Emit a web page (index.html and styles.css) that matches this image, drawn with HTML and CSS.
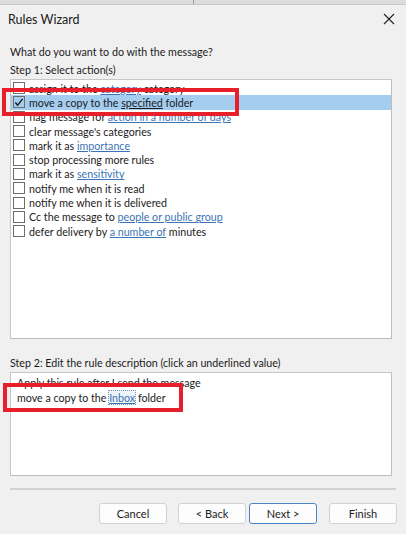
FILE: index.html
```html
<!DOCTYPE html>
<html lang="en">
  <head>
    <meta charset="UTF-8" />
    <meta name="viewport" content="width=device-width, initial-scale=1.0" />
    <title>Rules Wizard</title>
    <link rel="stylesheet" href="styles.css">
  </head>
  <body>
    <div class="top-strip"><span class="strip-split"></span></div>

    <div class="title-bar">
      <span class="title">Rules Wizard</span>
      <svg class="close" width="12" height="12" viewBox="0 0 12 12">
        <path d="M1 1 L11 11 M11 1 L1 11" stroke="#222" stroke-width="1.1" fill="none" />
      </svg>
    </div>

    <div class="content">
      <p class="question">What do you want to do with the message?</p>
      <p class="step">Step 1: Select action(s)</p>

      <div class="action-list">
        <div class="row"><span class="box"></span>assign it to the&nbsp;<a>category</a>&nbsp;category</div>
        <div class="row selected"><span class="box checked">
          <svg width="11" height="11" viewBox="0 0 11 11"><path d="M1.5 5.5 L4 8.5 L9.5 1.5" stroke="#111" stroke-width="1.4" fill="none" /></svg>
        </span>move a copy to the&nbsp;<a class="plain">specified</a>&nbsp;folder</div>
        <div class="row"><span class="box"></span>flag message for&nbsp;<a>action in a number of days</a></div>
        <div class="row"><span class="box"></span>clear message's categories</div>
        <div class="row"><span class="box"></span>mark it as&nbsp;<a>importance</a></div>
        <div class="row"><span class="box"></span>stop processing more rules</div>
        <div class="row"><span class="box"></span>mark it as&nbsp;<a>sensitivity</a></div>
        <div class="row"><span class="box"></span>notify me when it is read</div>
        <div class="row"><span class="box"></span>notify me when it is delivered</div>
        <div class="row"><span class="box"></span>Cc the message to&nbsp;<a>people or public group</a></div>
        <div class="row"><span class="box"></span>defer delivery by&nbsp;<a>a number of</a>&nbsp;minutes</div>

        <div class="mark mark-action"></div>
      </div>

      <p class="step step-two">Step 2: Edit the rule description (click an underlined value)</p>

      <div class="description">
        <div class="desc-line">Apply this rule after I send the message</div>
        <div class="desc-line">move a copy to the <a class="focus">Inbox</a> folder</div>
        <div class="mark mark-desc"></div>
      </div>

      <div class="separator"></div>

      <div class="buttons">
        <button class="btn">Cancel</button>
        <button class="btn btn-back">&lt; Back</button>
        <button class="btn btn-next">Next &gt;</button>
        <button class="btn btn-finish">Finish</button>
      </div>
    </div>
  </body>
</html>
```

FILE: styles.css
```css
body {
  margin: 0;
  background-color: #f0f0f0;
  font-family: "Lato", "Open Sans", sans-serif;
  font-size: 10.7px;
  color: #1b1b1b;
}

.top-strip {
  height: 4px;
  background-color: #dcdcdc;
  border-bottom: 1px solid #c9c9c9;
  position: relative;
}

.strip-split {
  position: absolute;
  left: 193px;
  top: 0;
  width: 1px;
  height: 4px;
  background-color: #9a9a9a;
}

.title-bar {
  display: flex;
  align-items: center;
  justify-content: space-between;
  height: 28px;
  padding: 0 11px 0 8px;
}

.title {
  font-size: 12.5px;
}

.content {
  padding: 0 14px 0 10px;
}

.question {
  margin: 11px 0 0 0;
  line-height: 16px;
}

.step {
  margin: 2px 0 0 0;
  line-height: 16px;
}

/* list of actions */
.action-list {
  position: relative;
  margin-top: 1px;
  height: 260px;
  background-color: #ffffff;
  border: 1px solid #c7c7c7;
  border-right-color: #bdbdbd;
  border-bottom-color: #bdbdbd;
  padding-top: 1px;
  box-sizing: border-box;
}

.row {
  display: flex;
  align-items: center;
  height: 14.3px;
  padding-left: 2px;
  white-space: nowrap;
}

.row.selected {
  background-color: #a4cdf0;
}

.box {
  display: inline-flex;
  align-items: center;
  justify-content: center;
  width: 10px;
  height: 10px;
  border: 1px solid #6e6e6e;
  background-color: #ffffff;
  margin-right: 4px;
  flex-shrink: 0;
}

.box.checked {
  background-color: transparent;
}

a {
  color: #3b74b5;
  text-decoration: underline;
}

a.plain {
  color: #1b1b1b;
}

.step-two {
  margin-top: 16px;
}

.description {
  position: relative;
  height: 104px;
  background-color: #ffffff;
  border: 1px solid #c7c7c7;
  border-right-color: #bdbdbd;
  border-bottom-color: #bdbdbd;
  box-sizing: border-box;
  padding: 2px 0 0 6px;
  margin-top: 1px;
}

.desc-line {
  line-height: 15px;
  white-space: nowrap;
}

a.focus {
  outline: 1px dotted #6f8fb5;
  background-color: #eef3f9;
}

/* red annotation boxes */
.mark {
  position: absolute;
  border: 4px solid #e61f2b;
  box-sizing: border-box;
}

.mark-action {
  left: -9px;
  top: 8px;
  width: 237px;
  height: 28px;
}

.mark-desc {
  left: -8px;
  top: 10px;
  width: 180px;
  height: 29px;
}

.separator {
  margin-top: 12px;
  margin-right: -4px;
  height: 2px;
  background-color: #d2d2d2;
}

.buttons {
  display: flex;
  justify-content: flex-end;
  gap: 3px;
  margin-top: 13px;
  margin-right: -5px;
}

.btn {
  width: 68px;
  height: 21px;
  padding: 0;
  font-family: "Lato", "Open Sans", sans-serif;
  font-size: 11px;
  color: #1b1b1b;
  background-color: #fdfdfd;
  border: 1px solid #d2d2d2;
  border-radius: 3px;
}

.btn-back {
  margin-left: 8px;
}

.btn-next {
  border-color: #4a84c8;
}

.btn-finish {
  margin-left: 9px;
}
```
